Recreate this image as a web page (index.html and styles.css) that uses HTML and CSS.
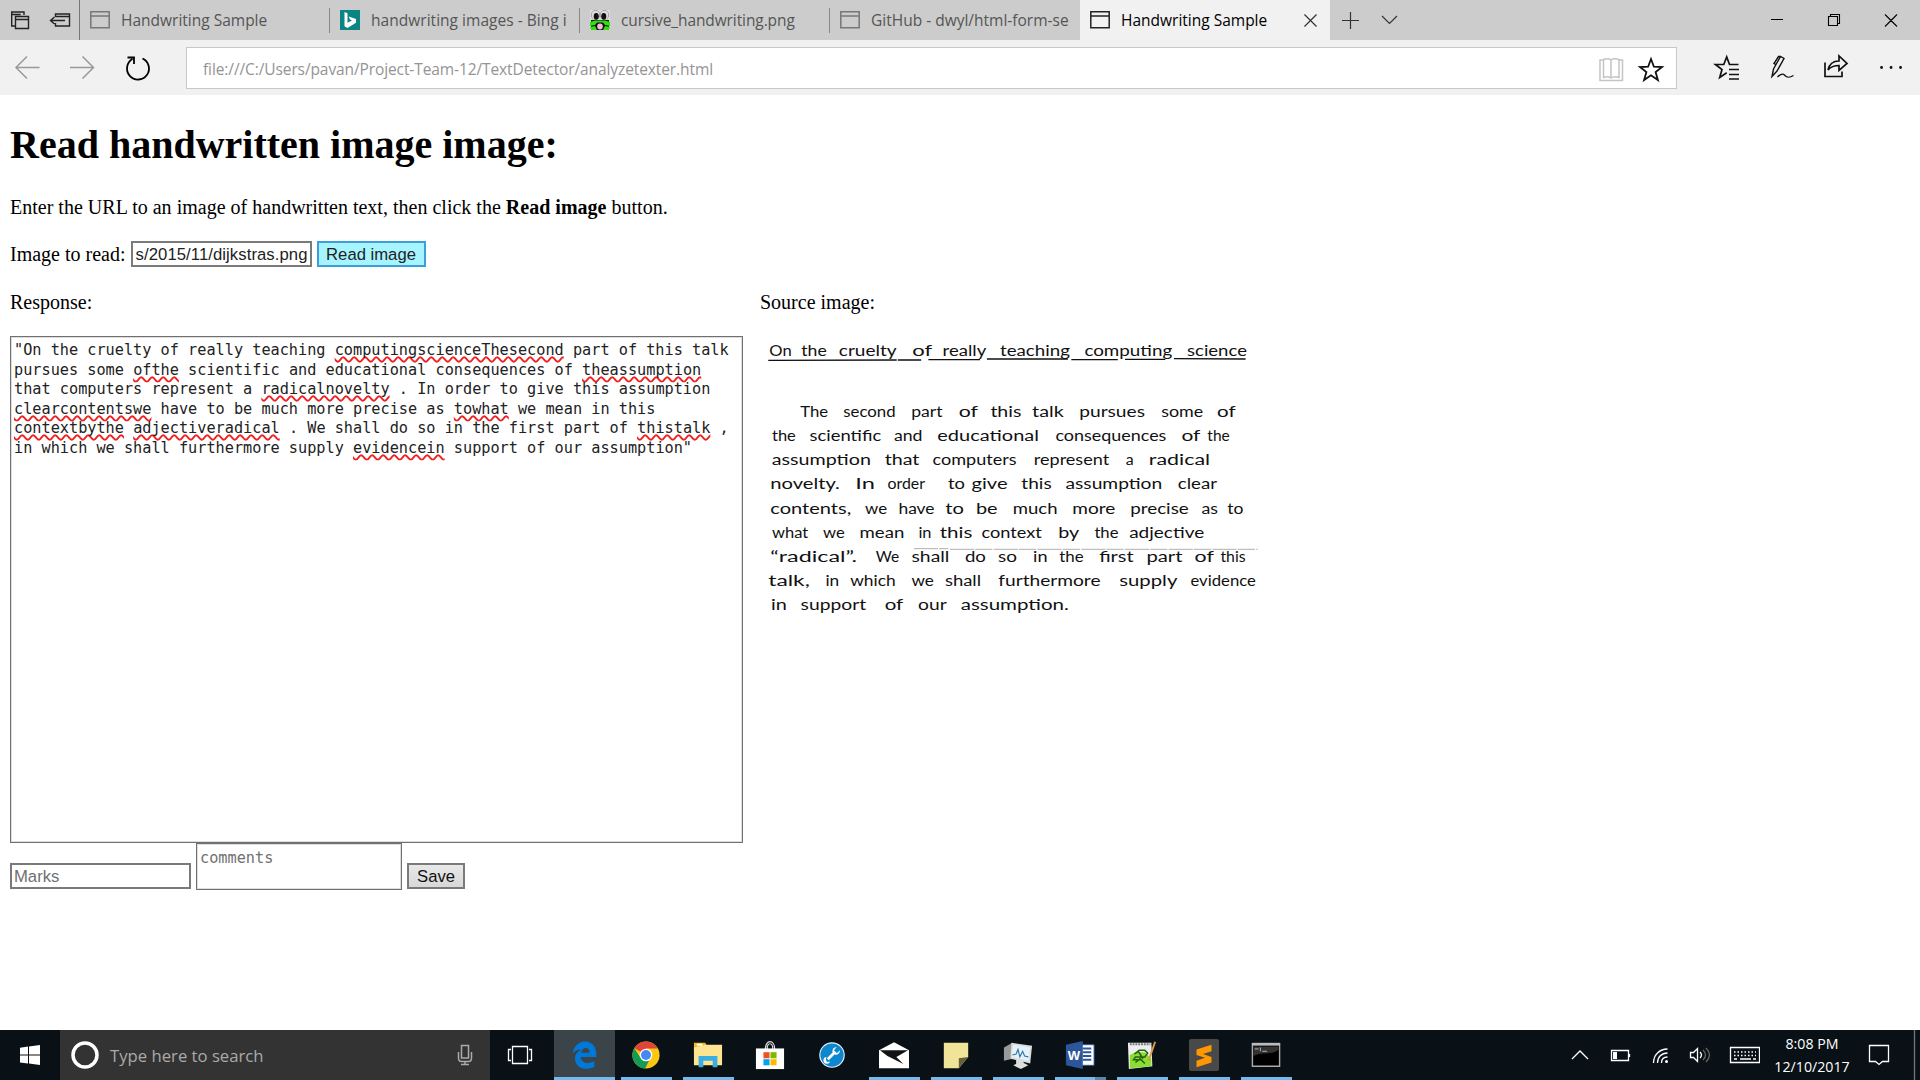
FILE: index.html
```html
<!DOCTYPE html>
<html lang="en">
<head>
<meta charset="utf-8">
<title>Handwriting Sample</title>
<link rel="stylesheet" href="styles.css">
</head>
<body>
<div class="tabstrip">
  <div class="tab-tools">
    <svg width="80" height="40" fill="none" stroke="#222" stroke-width="1.4"><path d="M11.700 23.500V12H24v3M11.700 14.500h9M15 26h-3.300v-3M15.500 16.500h13v12h-13zM15.500 19.500h13"/><path d="M55.500 17v-3h14v12h-14v-3M55.500 16.500h14M65 20.500H51M54.500 17l-4 3.500 4 3.500"/></svg>
  </div>
  <div class="tab"><svg class="fav" viewBox="0 0 20 20"><path d="M.8 1.800h18.400v16H.8zM.8 6h18.400" fill="none" stroke="#777" stroke-width="1.500"/></svg><span class="title">Handwriting Sample</span></div>
  <div class="tab"><svg class="fav" viewBox="0 0 20 20"><path fill="#0c8484" d="M0 0h20v20H0z"/><path fill="#fff" d="M4.500 2l3 1.300v9.500L12 10.500l-2-1-1.300-3L16 9v3.800L7.500 18l-3-1.700z"/></svg><span class="title bing">handwriting images - Bing i</span></div>
  <div class="tab"><svg class="fav" viewBox="0 0 20 20"><path fill="#ddd" d="M0 0h20v20H0z"/><path fill="#111" d="M1 10h18v8l-3 2H4l-3-2z"/><path fill="#35dc12" d="M0 12l5-1.500h10l5 1.500v4l-5-1-2-2.500H7L5 15l-5 1zM0 17l5-1 2 4H1zM20 17l-5-1-2 4h6z"/><ellipse cx="5.500" cy="5" rx="4.600" ry="4.900" fill="#999"/><ellipse cx="14.500" cy="5" rx="4.600" ry="4.900" fill="#999"/><ellipse cx="5.500" cy="5" rx="3.800" ry="4.200" fill="#ddd"/><ellipse cx="14.500" cy="5" rx="3.800" ry="4.200" fill="#ddd"/><ellipse cx="6.200" cy="6.300" rx="2.500" ry="3.400" fill="#111"/><ellipse cx="13.800" cy="6.300" rx="2.500" ry="3.400" fill="#111"/><ellipse cx="10" cy="16.500" rx="2.800" ry="3" fill="#f7b8e4"/></svg><span class="title cursive">cursive_handwriting.png</span></div>
  <div class="tab last"><svg class="fav" viewBox="0 0 20 20"><path d="M.8 1.800h18.400v16H.8zM.8 6h18.400" fill="none" stroke="#777" stroke-width="1.500"/></svg><span class="title">GitHub - dwyl/html-form-se</span></div>
  <div class="tab active"><svg class="fav" viewBox="0 0 20 20"><path d="M.8 1.800h18.400v16H.8zM.8 6h18.400" fill="none" stroke="#222" stroke-width="1.500"/></svg><span class="title">Handwriting Sample</span><svg class="close" viewBox="0 0 14 14"><path d="M.5.5l13 13M13.500.5l-13 13" stroke="#333" stroke-width="1.300"/></svg></div>
  <svg width="80" height="40" fill="none" stroke="#333" stroke-width="1.200"><path d="M12 20.500h17M20.500 12v17M52 16l7.500 7.500L67 16"/></svg>
  <svg class="window-buttons" width="160" height="40" fill="none" stroke="#000" stroke-width="1.100"><path d="M11 19.500h12M68.500 16.500h9v9h-9zM70.500 16v-1.500h9v9H78M125 14.500l12 12M137 14.500l-12 12"/></svg>
</div>
<div class="toolbar">
  <svg width="186" height="55" fill="none" stroke="#999" stroke-width="1.500"><path d="M39.500 27.500h-23M27 16.500l-11 11 11 11M70 27.500h23M82.500 16.500l11 11-11 11"/><path d="M132.500 19a11 11 0 1 0 10-.5M127.500 17.500h6.500V24" stroke="#000" stroke-width="1.800"/></svg>
  <div class="address"><span class="url">file:///C:/Users/pavan/Project-Team-12/TextDetector/analyzetexter.html</span>
    <svg width="78" height="40" fill="none"><path d="M5.500 12H2v20.500h22.500V12H21M13 12.500V29M13 12c-2-1.500-5-1.500-7.500-.5v18c2.500-1 5.500-1 7.500.5 2-1.500 5.500-1.500 8-.5v-18c-3-1-6-1-8 .5z" stroke="#c4c4c4" stroke-width="1.500"/><path d="M53 11l2.900 7.700 8.100.3-6.400 5 2.300 8-6.900-4.700L46.100 32l2.300-8-6.400-5 8.100-.3z" stroke="#111" stroke-width="1.800"/></svg>
  </div>
  <svg class="hub" width="242" height="55" fill="none" stroke="#111" stroke-width="1.700"><path d="M60.500 24.500H51.500L48.700 17l-2.900 7.500h-8.300l6.500 5-2.300 7.900 7-4.600M51 29.500h10M51 34.500h10M51 39h10"/><path d="M94 36.500l1.500-7.500 7-12.500 3.500 2-7 12.500-5 5.500zM98 24.500l-2-1 4.500-7 2.300 0M99.500 37c3-3 5-4 7-2 2 2.500 4 3.500 9 .5" stroke-width="1.400"/><path d="M147 22.500v14h17v-5M150 30c1.500-7 6-9 11-9v-5l8 7.500-8 7v-5c-5 0-8 1-11 4.500z"/><path d="M203.500 27.500h.1M213 27.500h.1M222.500 27.500h.1" stroke-width="2.800" stroke-linecap="round"/></svg>
</div>
<main class="page">
  <h1>Read handwritten image image:</h1>
  <p class="intro">Enter the URL to an image of handwritten text, then click the <b>Read image</b> button.</p>
  <div class="read-row"><span>Image to read:</span><div class="field clip">s/2015/11/dijkstras.png</div><button class="btn hot">Read image</button></div>
  <div class="columns">
    <section class="response">
      <p>Response:</p>
      <div class="output">"On the cruelty of really teaching <u>computingscienceThesecond</u> part of this talk
pursues some <u>ofthe</u> scientific and educational consequences of <u>theassumption</u>
that computers represent a <u>radicalnovelty</u> . In order to give this assumption
<u>clearcontentswe</u> have to be much more precise as <u>towhat</u> we mean in this
<u>contextbythe</u> <u>adjectiveradical</u> . We shall do so in the first part of <u>thistalk</u> ,
in which we shall furthermore supply <u>evidencein</u> support of our assumption"</div>
      <div class="save-row"><div class="field muted">Marks</div><div class="comments">comments</div><button class="btn">Save</button></div>
    </section>
    <section class="source">
      <p>Source image:</p>
      <svg class="scan" viewBox="760 331 500 300" width="500" height="300">
        <g id="scan-top" transform="translate(740 280) scale(.3444 .3333)">
          <path d="M82 241L455 240M458 240h68M547 239h150M717 237h235M962 239h135M1118 238h117M1260 236l208 1" stroke="#111" stroke-width="4"/>
        </g>
        <g id="scan-body" transform="translate(740 450) scale(.3444 .3333)">
          <path d="M505 296h100M610 298h893" stroke="#888" stroke-width="2" stroke-dasharray="70 3 50 4"/>
        </g>
      </svg>
    </section>
  </div>
</main>
<footer class="taskbar">
  <svg width="60" height="50" fill="#fff"><path d="M20 17.800l8-1.200v7.900h-8zM29 16.500L40 15v9.500H29zM20 25.500h8v8.100l-8-1.200zM29 25.500h11V35l-11-1.400z"/></svg>
  <div class="search"><svg width="50" height="50"><circle cx="25" cy="25" r="12" fill="none" stroke="#fff" stroke-width="3.500"/></svg><span>Type here to search</span><svg class="mic" width="16" height="22" fill="none" stroke="#aaa" stroke-width="1.500"><path d="M4.500 1.500h7v12.500h-7zM1.500 8v6c0 2 1 3.500 3 3.500h7c2 0 3-1.500 3-3.500V8M8 17.500V20M4 20.500h8"/></svg></div>
  <svg width="64" height="50" fill="none" stroke="#fff" stroke-width="1.300"><path d="M22.500 16.500h15v17h-15zM21 19.500h-2.500v11H21M39 19.500h2.500v11H39"/></svg>
  <div class="app edge"><svg viewBox="0 0 32 32"><path fill="#0078d7" fill-rule="evenodd" d="M3 14C4 6 10 1.500 16 1.500c8 0 12 6 12 13V18H11.500c.5 7 9 8 14.500 4.500V28.500c-7 4-17.500 3-20-5-2-7 1-10.500 6-13.500-4 0-7 1.500-9 4zm9-.5h9c0-6.500-8-6.500-9 0z"/></svg></div>
  <div class="app run"><svg viewBox="0 0 32 32"><circle cx="16" cy="16" r="14.500" fill="#fbc712"/><path fill="#df4437" d="M16 16L3.500 8.600A14.500 14.500 0 0 1 28.500 9H16z"/><path fill="#139b58" d="M3.500 8.600A14.500 14.500 0 0 0 15 30.500l6-11.500-5-3-6 3z"/><circle cx="16" cy="16" r="6.700" fill="#fff"/><circle cx="16" cy="16" r="5.300" fill="#4688f4"/></svg></div>
  <div class="app run"><svg viewBox="0 0 32 32"><path fill="#f2bc20" d="M1 3h12l2 3v5H1z"/><path fill="#fee391" d="M1 8l12-3h18v22H1z"/><path fill="#fff" d="M4 4h6v2H4z"/><path fill="#39aee5" d="M6 17h20v12h-5v-7H11v7H6z"/></svg></div>
  <div class="app"><svg viewBox="0 0 32 32"><path d="M11 10c0-11 10-11 10 0M13 10c0-8 6-8 6 0" fill="none" stroke="#ddd" stroke-width="1.300"/><path fill="#fff" d="M1 9h30v22H1z"/><path fill="#f25022" d="M9 13h6.500v6.500H9z"/><path fill="#7fba00" d="M16.500 13H23v6.500h-6.500z"/><path fill="#00a4ef" d="M9 20.500h6.500V27H9z"/><path fill="#ffb900" d="M16.500 20.500H23V27h-6.500z"/></svg></div>
  <div class="app"><svg viewBox="0 0 32 32"><circle cx="16" cy="16" r="13" fill="#0d87ce" stroke="#e4f3fa" stroke-width="1.200"/><path d="M11.500 20.500l8-8" stroke="#fff" stroke-width="3"/><path d="M24.500 11l-3.500 3-3-3 3-3.500a4.500 4.500 0 0 0-4.500 5.500l2.500 2.500c3.500 1 5.500-1.500 5.500-4.500zM10 18a3.700 3.700 0 1 0 4 5l-3.500.5-1-3z" fill="#fff"/></svg></div>
  <div class="app run"><svg viewBox="0 0 32 32"><path fill="#fff" d="M0 11l16-8.500L32 11v19H0z"/><path fill="#101315" d="M1 11h30L18.500 18l7.500 7.500L9 17z"/></svg></div>
  <div class="app run"><svg viewBox="0 0 32 32"><path fill="#f0e498" d="M3 3h26v15L19 30H3z"/><path fill="#65613f" d="M19 30V19.500l10-1.500z"/></svg></div>
  <div class="app run"><svg viewBox="0 0 32 32"><path fill="#999" d="M1 8l9-5v17l-9 2z"/><path fill="#ddd" d="M9 3l22 3-2 19-21-5z"/><path fill="#e6f2f8" d="M11 5l18 3-2 14-18-4z"/><path d="M10 16l4-1 2-5 2 8 3-6 2 5 4 1" fill="none" stroke="#2679ad" stroke-width="1.200"/><path fill="#ddd" d="M14 21h8v5h-8zM11 27l8-4 8 4-8 4z"/></svg></div>
  <div class="app run word"><svg viewBox="0 0 32 32"><path fill="#fff" stroke="#2b579a" d="M17 5h14v22H17z"/><path d="M19 9h9M19 13h9M19 17h9M19 21h9" stroke="#2b579a" stroke-width="2"/><path fill="#2b579a" d="M1 5l18-4v30L1 27z"/><text class="word-mark" x="3" y="21">W</text></svg></div>
  <div class="app run"><svg viewBox="0 0 32 32"><path fill="#eee" d="M1 3h25l1 25-25 3z"/><path d="M3 4.500h22" stroke="#777" stroke-width="2" stroke-dasharray="2 1"/><path fill="#8bdd30" d="M3 16l6-3h10l7 7v8L3 30z"/><path d="M8 15l5-4h6l3 3-3 4H9l-2 3h8M12 12l5 8M9 24l5-4 5 5" fill="none" stroke="#275e16" stroke-width="1.600"/><path d="M30 2l-7 20" stroke="#d69b43" stroke-width="2"/></svg></div>
  <div class="app run"><svg viewBox="0 0 32 32"><rect y="-1" width="32" height="34" rx="2" fill="#494949"/><path fill="#ff9800" d="M8 10l16-5v7l-9 3 9 3v6L8 29v-7l9-3-9-3z"/></svg></div>
  <div class="app run"><svg viewBox="0 0 32 32"><path fill="#000" stroke="#aaa" stroke-width="1.500" d="M1.500 4h29v24h-29z"/><path fill="#333" d="M2.500 17C12 12 22 17 29.500 10V7h-27z"/><path fill="#bbb" d="M1 3h30v3H1z"/><path d="M4 9.500h4M10 8v4M12 12h5" stroke="#bbb"/></svg></div>
  <svg class="tray" width="200" height="50" fill="none" stroke="#fff" stroke-width="1.300"><path d="M12 29l8-8 8 8M51.500 20.500h17v10h-17zM69.500 24v3"/><path fill="#fff" stroke="none" d="M53 22h4v7h-4z"/><path d="M93.500 33c0-8 6-14 14-14M97.500 33c0-6 4-10 10-10M101.500 33c0-4 2-6 6-6"/><circle cx="106.500" cy="31.500" r="1.500" fill="#fff" stroke="none"/><path d="M130.500 22.500h3l4-4v13l-4-4h-3zM140 22q3 3 0 6"/><path d="M143 20q5 5 0 10M146 18q7 7 0 14" stroke="#666"/><path d="M170.500 17.500h29v15h-29z"/><path d="M174 22h22M174 25.500h22" stroke-dasharray="1.500 2"/><path d="M174 29h3M180 29h11M193 29h3"/></svg>
  <div class="clock"><span>8:08 PM</span><span>12/10/2017</span></div>
  <svg width="65" height="50" fill="none" stroke="#fff" stroke-width="1.300"><path d="M14.500 15.500h19v16h-6l-3.500 3-3.500-3h-6z"/><path d="M59.500 0v50" stroke="#777"/></svg>
</footer>
<script src="scan.js"></script>
</body>
</html>
```
FILE: scan.js
```js
// Each line of the note: baseline, then "word x width" entries.
const notes = {
  'scan-top': [
    [229, 'On 85 65|the 178 74|cruelty 287 168|of 500 58|really 588 127|teaching 755 203|computing 1000 255|science 1298 174'],
    [411, 'The 175 81|second 300 152|part 497 91|of 635 56|this 727 90|talk 848 92|pursues 985 191|some 1223 122|of 1385 54'],
    [484, 'the 93 69|scientific 202 208|and 447 83|educational 573 295|consequences 916 322|of 1282 55|the 1357 65']
  ],
  'scan-body': [
    [45, 'assumption 92 288|that 420 101|computers 559 244|represent 853 219|a 1120 23|radical 1187 178'],
    [118, 'novelty. 88 202|In 335 57|order 428 109|to 604 49|give 672 105|this 817 88|assumption 945 281|clear 1271 114'],
    [193, 'contents, 88 235|we 363 64|have 460 105|to 596 54|be 685 63|much 792 130|more 965 125|precise 1133 170|as 1340 48|to 1415 47'],
    [263, 'what 93 105|we 241 63|mean 347 130|in 518 38|this 580 95|context 701 175|by 924 61|the 1029 70|adjective 1130 218'],
    [336, '“radical”. 88 252|We 394 68|shall 498 110|do 653 61|so 749 55|in 851 42|the 927 71|first 1043 100|part 1180 105|of 1320 56|this 1395 73'],
    [408, 'talk, 82 121|in 248 40|which 320 132|we 498 65|shall 595 105|furthermore 750 297|supply 1101 169|evidence 1308 190'],
    [481, 'in 90 46|support 176 190|of 420 54|our 517 83|assumption. 641 314']
  ]
};

for (const [id, lines] of Object.entries(notes)) {
  const group = document.getElementById(id);
  for (const [baseline, words] of lines) {
    for (const entry of words.split('|')) {
      const [word, x, width] = entry.split(' ');
      const text = document.createElementNS('http://www.w3.org/2000/svg', 'text');
      text.setAttribute('x', x);
      text.setAttribute('y', baseline);
      text.setAttribute('textLength', width);
      text.setAttribute('lengthAdjust', 'spacingAndGlyphs');
      text.textContent = word;
      group.append(text);
    }
  }
}
```
FILE: styles.css
```css
* { box-sizing: border-box; }
body {
  margin: 0;
  width: 1920px;
  height: 1080px;
  overflow: hidden;
  display: flex;
  flex-direction: column;
  background: #fff;
  color: #000;
  font: 20px/23px "Liberation Serif", serif;
}
svg { display: block; flex: none; }

/* Browser chrome */
.tabstrip {
  display: flex;
  height: 40px;
  background: #ccc;
  font: 15.5px/41px "Open Sans", sans-serif;
  color: #555;
}
.tab-tools { width: 80px; border-right: 1px solid #777; }
.tab {
  position: relative;
  display: flex;
  align-items: center;
  width: 250px;
  padding: 0 11px 0 10px;
  gap: 11px;
}
.tab:not(.last):not(.active)::after {
  content: "";
  position: absolute;
  right: 0;
  top: 8px;
  width: 1px;
  height: 25px;
  background: #888;
}
.fav { width: 20px; height: 20px; }
.title { flex: 1; white-space: nowrap; overflow: hidden; }
.bing { letter-spacing: 0.03px; }
.cursive { letter-spacing: -0.1px; }
.active { background: #f1f1f1; color: #000; padding-right: 13px; }
.close { width: 13px; height: 13px; }
.window-buttons { margin-left: auto; }
.toolbar { display: flex; height: 55px; background: #f1f1f1; }
.address {
  display: flex;
  justify-content: space-between;
  width: 1491px;
  height: 42px;
  margin-top: 7px;
  padding-left: 16px;
  background: #fff;
  border: 1px solid #c8c8c8;
  font: 15.5px/43px "Open Sans", sans-serif;
  color: #949494;
}
.url { letter-spacing: -0.1px; }
.hub { margin: 0 -1px 0 1px; }

/* Document */
.page { flex: 1; padding: 0 10px; }
h1 { margin: 27px 0 28px; font-size: 40px; line-height: 46px; }
p { margin: 0; }
.intro { margin-bottom: 19px; letter-spacing: 0.01px; }
.read-row { display: flex; align-items: center; height: 32px; }
.field {
  width: 181px;
  height: 26px;
  padding: 0 2px;
  border: 2px solid #7a7a7a;
  background: #fff;
  color: #222;
  font: 16.67px/23px "Liberation Sans", sans-serif;
  white-space: nowrap;
}
.read-row .field { margin: 0 5px; }
.clip {
  overflow: hidden;
  display: flex;
  justify-content: flex-end;
  letter-spacing: 0.08px;
}
.btn {
  height: 26px;
  padding: 1px 8px 0;
  border: 2px solid #7a7a7a;
  background: linear-gradient(#e8e8e8, #d8d8d8);
  color: #111;
  font: 16.67px/21px "Liberation Sans", sans-serif;
}
.hot { width: 109px; padding: 1px 0 0; background: #a6f4ff; border-color: #3c9edb; color: #222; }
.columns { display: flex; gap: 17px; margin-top: 21px; }
.response { width: 733px; }
.output {
  height: 507px;
  margin-top: 22px;
  padding: 4px 3px;
  border: 1px solid #707070;
  box-shadow: inset 0 0 0 1px #ddd;
  font: 15.22px/19.5px "DejaVu Sans Mono", monospace;
  color: #222;
  white-space: pre;
}
.output u {
  text-decoration: underline wavy #f02020 1.5px;
  text-underline-offset: 1px;
  text-decoration-skip-ink: none;
}
.save-row { display: flex; align-items: flex-start; gap: 5px; }
.save-row .field, .save-row .btn { margin-top: 20px; }
.save-row .btn { width: 58px; padding: 1px 0 0; }
.muted { color: #707070; }
.comments {
  width: 206px;
  height: 47px;
  padding: 4px 3px;
  border: 1px solid #707070;
  box-shadow: inset 0 0 0 1px #ddd;
  font: 15.22px/21px "DejaVu Sans Mono", monospace;
  color: #707070;
}
.scan { margin-top: 17px; font: 46px Lato, sans-serif; fill: #111; }

/* Taskbar */
.taskbar { display: flex; height: 50px; background: #091116; color: #fff; }
.search {
  display: flex;
  align-items: center;
  width: 430px;
  padding-right: 17px;
  background: #333;
  color: #aaa;
  font: 16.7px/51px "Open Sans", sans-serif;
}
.mic { margin-left: auto; }
.app {
  position: relative;
  display: flex;
  justify-content: center;
  align-items: center;
  width: 62px;
}
.app svg { width: 30px; height: 30px; overflow: visible; }
.edge { width: 61px; background: #3b4449; border-bottom: 3px solid #76b9ed; }
.edge svg { margin-top: 3px; }
.run::after {
  content: "";
  position: absolute;
  left: 6px;
  bottom: 0;
  width: 51px;
  height: 3px;
  background: #76b9ed;
}
.word::after { background: linear-gradient(90deg, #76b9ed 40px, #5a87ab 40px); }
.word-mark { font: bold 14px "Liberation Sans", sans-serif; fill: #fff; }
.tray { margin-left: auto; }
.clock {
  display: flex;
  flex-direction: column;
  align-items: center;
  width: 95px;
  padding: 2px 0 0 9px;
  font: 14.2px/23px "Open Sans", sans-serif;
}
```
